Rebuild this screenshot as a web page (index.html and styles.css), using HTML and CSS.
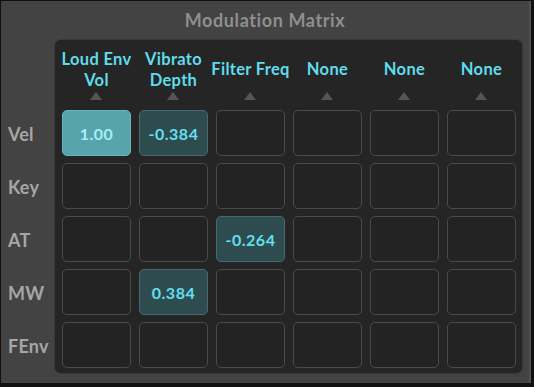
FILE: index.html
```html
<!DOCTYPE html>
<html lang="en">
<head>
  <meta charset="UTF-8">
  <title>Modulation Matrix</title>
  <link rel="stylesheet" href="styles.css">
</head>
<body>

  <div class="window">
    <h1 class="title">Modulation Matrix</h1>

    <div class="body">
      <div class="sources">
        <div class="source">Vel</div>
        <div class="source">Key</div>
        <div class="source">AT</div>
        <div class="source">MW</div>
        <div class="source">FEnv</div>
      </div>

      <div class="matrix">
        <div class="dest"><span class="dest-name">Loud Env<br>Vol</span><span class="arrow"></span></div>
        <div class="dest"><span class="dest-name">Vibrato<br>Depth</span><span class="arrow"></span></div>
        <div class="dest"><span class="dest-name">Filter Freq</span><span class="arrow"></span></div>
        <div class="dest"><span class="dest-name">None</span><span class="arrow"></span></div>
        <div class="dest"><span class="dest-name">None</span><span class="arrow"></span></div>
        <div class="dest"><span class="dest-name">None</span><span class="arrow"></span></div>

        <div class="cell full">1.00</div>
        <div class="cell on">-0.384</div>
        <div class="cell"></div>
        <div class="cell"></div>
        <div class="cell"></div>
        <div class="cell"></div>

        <div class="cell"></div>
        <div class="cell"></div>
        <div class="cell"></div>
        <div class="cell"></div>
        <div class="cell"></div>
        <div class="cell"></div>

        <div class="cell"></div>
        <div class="cell"></div>
        <div class="cell on">-0.264</div>
        <div class="cell"></div>
        <div class="cell"></div>
        <div class="cell"></div>

        <div class="cell"></div>
        <div class="cell on">0.384</div>
        <div class="cell"></div>
        <div class="cell"></div>
        <div class="cell"></div>
        <div class="cell"></div>

        <div class="cell"></div>
        <div class="cell"></div>
        <div class="cell"></div>
        <div class="cell"></div>
        <div class="cell"></div>
        <div class="cell"></div>
      </div>
    </div>
  </div>

</body>
</html>
```

FILE: styles.css
```css
body {
  margin: 0;
  background: #101010;
  font-family: 'Lato', sans-serif;
  font-weight: bold;
}

.window {
  margin: 1px 0 0 1px;
  width: 530px;
  height: 382px;
  background: #434343;
  box-sizing: border-box;
  border-right: 2px solid #515151;
}

.title {
  margin: 0;
  height: 39px;
  padding-top: 9px;
  box-sizing: border-box;
  text-align: center;
  font-size: 18px;
  line-height: 20px;
  letter-spacing: 0.6px;
  color: #8f8f8f;
}

.body {
  display: flex;
}

.sources {
  width: 54px;
  padding-top: 71px;
  display: flex;
  flex-direction: column;
  gap: 7px;
}

.source {
  height: 46px;
  display: flex;
  align-items: center;
  padding-left: 7px;
  font-size: 18px;
  letter-spacing: 0.2px;
  color: #a6a6a6;
}

.matrix {
  width: 467px;
  height: 333px;
  box-sizing: border-box;
  padding: 0 6px 5px 7px;
  background: #252525;
  border-radius: 6px;
  box-shadow: 0 0 2px rgba(0, 0, 0, 0.5);
  display: grid;
  grid-template-columns: repeat(6, 69px);
  grid-template-rows: 63px repeat(5, 46px);
  column-gap: 8px;
  row-gap: 7px;
}

.dest {
  position: relative;
  display: flex;
  align-items: center;
  justify-content: center;
  text-align: center;
  padding-top: 6px;
  padding-bottom: 10px;
  box-sizing: border-box;
  font-size: 16.5px;
  line-height: 21px;
  letter-spacing: 0.3px;
  color: #5fdcec;
  white-space: nowrap;
}

.arrow {
  position: absolute;
  left: 28px;
  bottom: 3px;
  width: 0;
  height: 0;
  border-left: 6.5px solid transparent;
  border-right: 6.5px solid transparent;
  border-bottom: 8px solid #555;
}

.cell {
  box-sizing: border-box;
  border: 1px solid #4a4a4a;
  border-radius: 5px;
  background: #232323;
  display: flex;
  align-items: center;
  justify-content: center;
  font-size: 16px;
  letter-spacing: 0.5px;
  color: #62e0f0;
}

.cell.on {
  background: #2e4b50;
  border-color: #456a70;
}

.cell.full {
  background: #58a4ad;
  border-color: #6ab6be;
  color: #a4f0f8;
}
```
